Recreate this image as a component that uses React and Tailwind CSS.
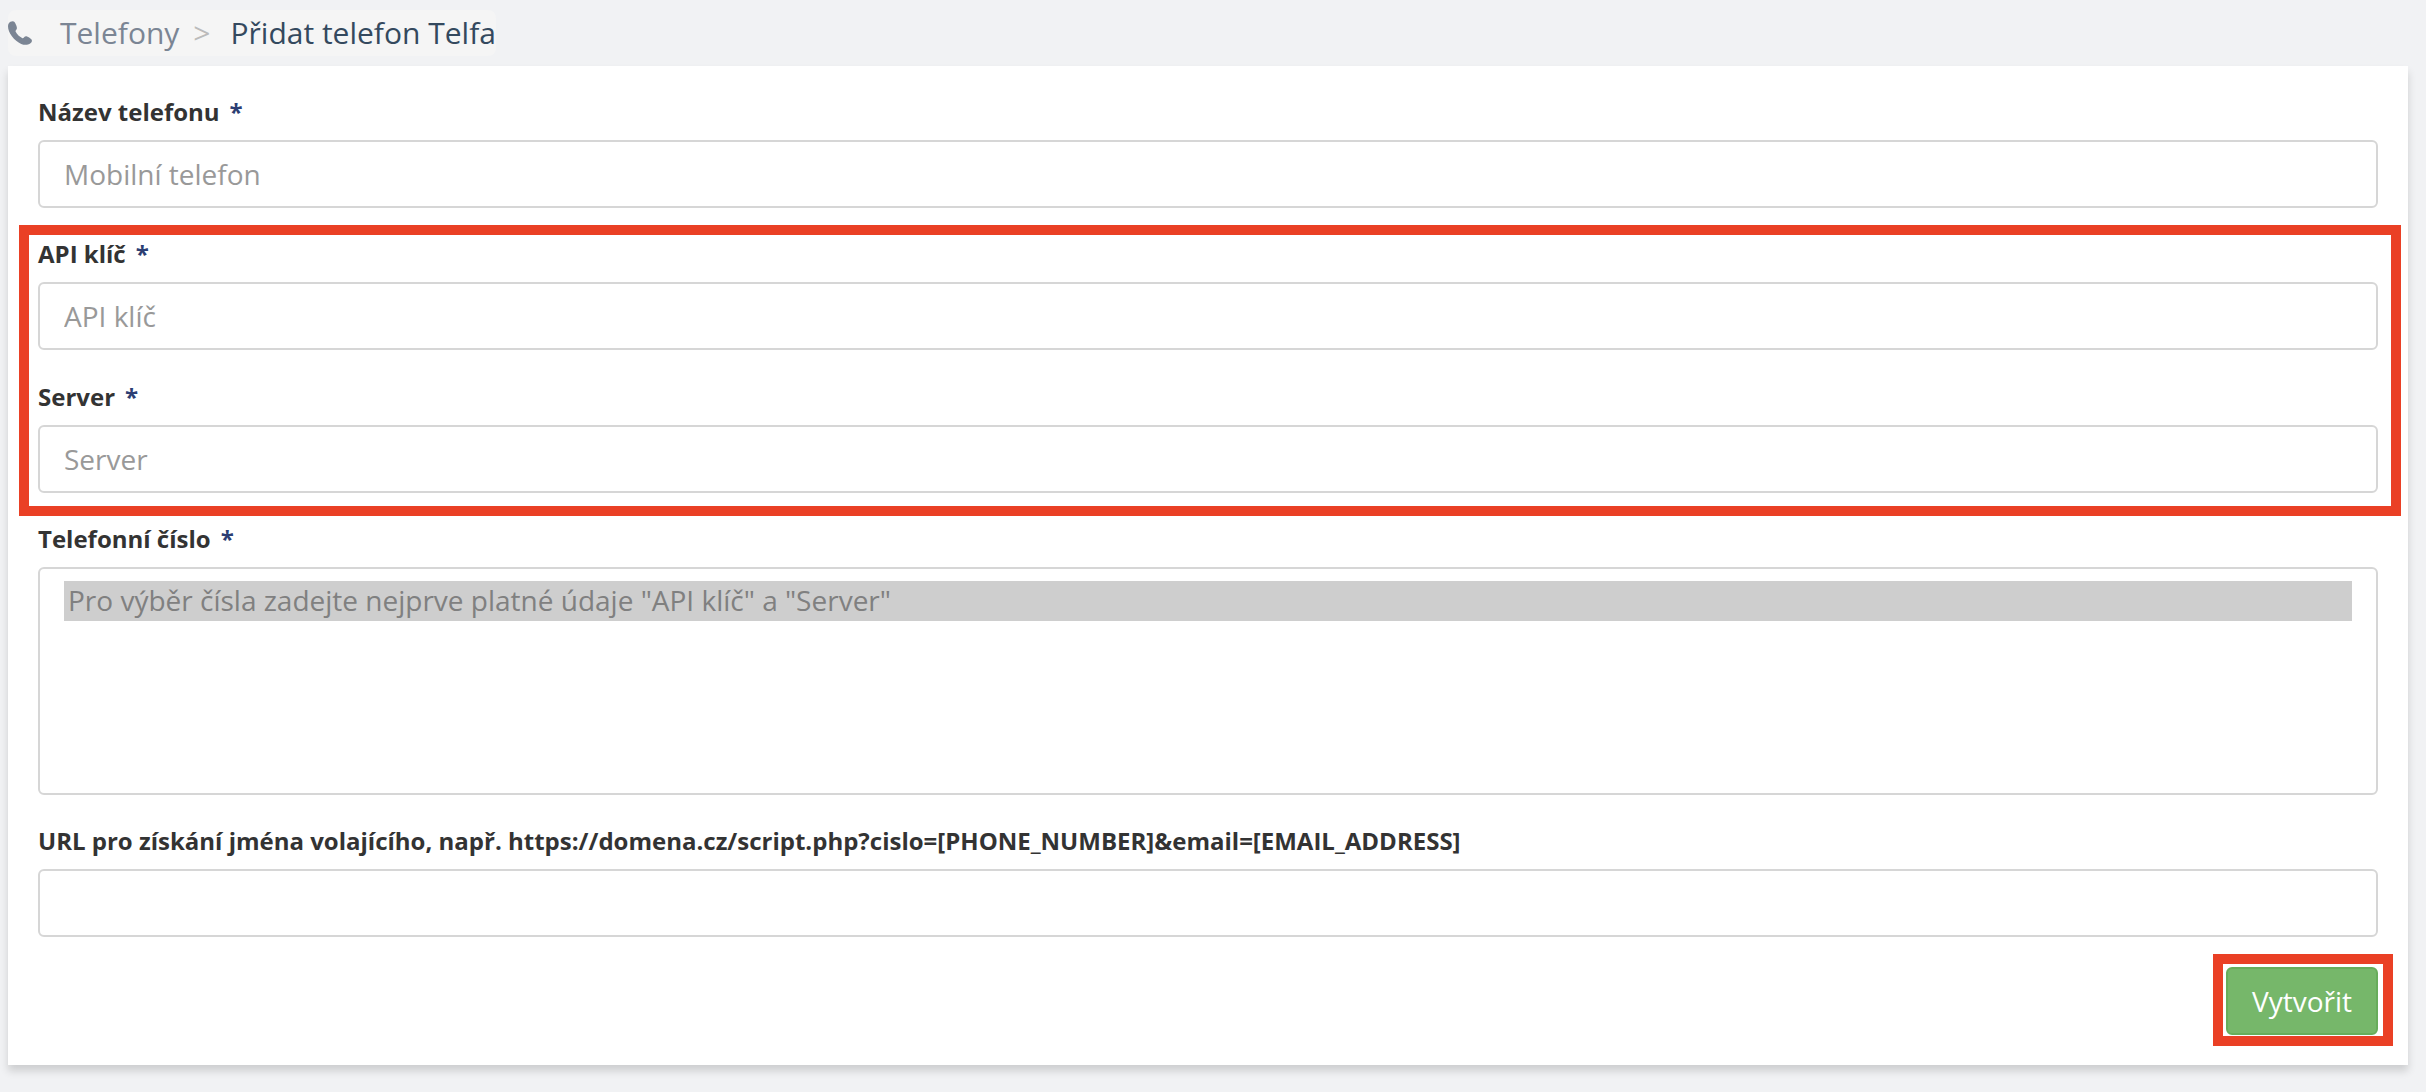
import React from "react";

const controlClass =
  "block w-full rounded-md border-2 border-[#d6d6d6] bg-white px-6 text-[28px] text-[#555555] outline-none focus:border-[#8a93a5]";

function Label({ htmlFor, required, children }) {
  return (
    <label
      htmlFor={htmlFor}
      className="block h-8 text-2xl leading-8 font-bold whitespace-nowrap text-[#333333]"
    >
      {children}
      {required && <span className="ml-2.5 text-[#2c3e73]">*</span>}
    </label>
  );
}

function TextField({ id, label, required, placeholder }) {
  return (
    <div className="flex flex-col gap-3">
      <Label htmlFor={id} required={required}>
        {label}
      </Label>
      <input
        id={id}
        type="text"
        placeholder={placeholder}
        className={`${controlClass} h-[68px] placeholder:text-[#999999]`}
      />
    </div>
  );
}

function PhoneIcon() {
  return (
    <svg viewBox="0 0 24 24" className="size-6 shrink-0 text-[#7b8594]" fill="currentColor" aria-hidden="true">
      <path d="M2.4.8C1 1.600 0 3.200 0 5.200c0 3.200 1.400 6.900 3.900 10.100 2.500 3.300 5.900 6.200 9.300 7.600 2.200.9 4.700 1.200 6.800.6 1.900-.5 3.400-1.500 3.800-2.900.3-1.200.1-2.100-.8-2.700-1.200-.9-2.500-1.700-3.900-2.400-1-.5-1.900-.4-2.500.3l-.9 1c-.5.5-1 .5-1.600.2-2.700-1.300-4.900-3.500-6.400-6.200-.3-.6-.2-1.100.2-1.600.7-.7 1.200-1.500 1-2.500C8.600 4.600 7.600 2.800 6.500 1.100 5.700-.1 4.100-.1 2.400.8z" />
    </svg>
  );
}

export default function App() {
  return (
    <div className="min-h-screen bg-[#f1f2f4] pr-[18px] pb-[27px] pl-2 font-['Open_Sans','Noto_Sans',sans-serif]">
      <header className="flex h-[66px] items-center">
        <nav
          aria-label="Drobečková navigace"
          className="flex h-[46px] items-center rounded-lg bg-[#f5f5f5] text-[30px] leading-[46px] whitespace-nowrap"
        >
          <PhoneIcon />
          <a href="#telefony" className="ml-7 text-[#7b8594]">
            Telefony
          </a>
          <span className="ml-3.5 text-[#bbbbbb]">&gt;</span>
          <span className="ml-5 text-[#34495e]" aria-current="page">
            Přidat telefon Telfa
          </span>
        </nav>
      </header>

      <form
        className="flex flex-col gap-[30px] bg-white p-[30px] shadow-[0_6px_8px_rgba(0,0,0,0.15)]"
        onSubmit={(e) => e.preventDefault()}
      >
        <TextField id="name" label="Název telefonu" required placeholder="Mobilní telefon" />

        <div className="relative flex flex-col gap-[31px]">
          <TextField id="api-key" label="API klíč" required placeholder="API klíč" />
          <TextField id="server" label="Server" required placeholder="Server" />
          <div className="pointer-events-none absolute -top-[13px] -right-[23px] -bottom-[23px] -left-[19px] border-10 border-[#ea4025]" />
        </div>

        <div className="flex flex-col gap-3">
          <Label htmlFor="number" required>
            Telefonní číslo
          </Label>
          <select
            id="number"
            multiple
            disabled
            defaultValue={["none"]}
            className={`${controlClass} h-[228px] appearance-none overflow-hidden py-3 opacity-100`}
          >
            <option
              value="none"
              className="h-10 min-h-10 bg-[#cecece] px-1 py-0 leading-10 text-[#808080]"
            >
              Pro výběr čísla zadejte nejprve platné údaje "API klíč" a "Server"
            </option>
          </select>
        </div>

        <TextField
          id="url"
          label="URL pro získání jména volajícího, např. https://domena.cz/script.php?cislo=[PHONE_NUMBER]&email=[EMAIL_ADDRESS]"
        />

        <div className="flex justify-end">
          <div className="relative">
            <button
              type="submit"
              className="h-[68px] rounded-md border-2 border-[#67ad5b] bg-[#76b76a] px-6 text-[28px] whitespace-nowrap text-white"
            >
              Vytvořit
            </button>
            <div className="pointer-events-none absolute -top-[13px] -right-[15px] -bottom-[11px] -left-[13px] border-10 border-[#ea4025]" />
          </div>
        </div>
      </form>
    </div>
  );
}
